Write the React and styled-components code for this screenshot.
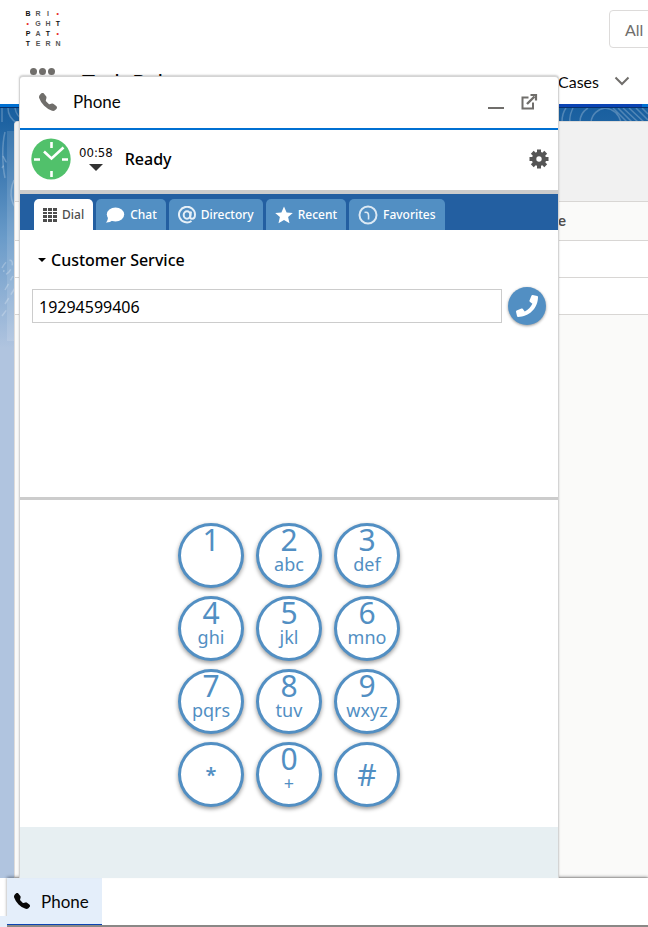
import React, { useState } from "react";
import styled, { createGlobalStyle } from "styled-components";
import { BsTelephoneFill } from "react-icons/bs";
import { FaPhone } from "react-icons/fa";

const LOGO = ["BRI·", "·GHT", "PAT·", "TERN"];
const BOLD = ["B", "T", "P"];

const TABS = [
  { id: "dial", label: "Dial" },
  { id: "chat", label: "Chat" },
  { id: "directory", label: "Directory" },
  { id: "recent", label: "Recent" },
  { id: "favorites", label: "Favorites" },
];

const KEYS = [
  { digit: "1", letters: "" },
  { digit: "2", letters: "abc" },
  { digit: "3", letters: "def" },
  { digit: "4", letters: "ghi" },
  { digit: "5", letters: "jkl" },
  { digit: "6", letters: "mno" },
  { digit: "7", letters: "pqrs" },
  { digit: "8", letters: "tuv" },
  { digit: "9", letters: "wxyz" },
  { digit: "*", symbol: true, small: true },
  { digit: "0", letters: "+" },
  { digit: "#", symbol: true },
];

const Chevron = () => (
  <svg width="16" height="10" viewBox="0 0 16 10" fill="none">
    <path d="M1.5 1.5 8 8l6.500-6.500" stroke="#706e6b" strokeWidth="2" />
  </svg>
);

const PopOut = () => (
  <svg width="18" height="18" viewBox="0 0 18 18" fill="none">
    <path d="M8.500 4.500H2.500v11H13V9.500" stroke="#706e6b" strokeWidth="2" />
    <path d="M7 11 14.500 3.500" stroke="#706e6b" strokeWidth="2.400" />
    <path d="M10.500 2H16v5.500" stroke="#706e6b" strokeWidth="2.200" />
  </svg>
);

const Clock = () => (
  <svg width="40" height="42" viewBox="0 0 40 42">
    <ellipse cx="20" cy="21" rx="19.700" ry="20.500" fill="#51c16b" />
    <g stroke="#fff" strokeWidth="2.600">
      <path d="M20.500 4v6M20.500 33v6M3 21.500h6M31 21.500h6" />
      <path d="M13 13.500 20.500 20.500 32.500 9.500" fill="none" />
    </g>
  </svg>
);

const Gear = () => (
  <svg width="20" height="20" viewBox="-10 -10 20 20" fill="#555">
    {[0, 45, 90, 135].map((a) => (
      <rect key={a} x="-2" y="-9.500" width="4" height="19" transform={`rotate(${a})`} />
    ))}
    <circle r="7.200" />
    <circle r="2.700" fill="#fff" />
  </svg>
);

const TabIcon = ({ id }) => {
  if (id === "dial") {
    return (
      <svg width="14" height="14" viewBox="0 0 14 14" fill="#4d4d4d">
        {[0, 5, 10].map((x) =>
          [0, 4, 7, 11].map((y) => (
            <rect key={`${x}-${y}`} x={x} y={y} width="4" height={y === 4 ? 2 : 3} />
          ))
        )}
      </svg>
    );
  }
  if (id === "chat") {
    return (
      <svg width="20" height="18" viewBox="0 0 20 18" fill="#fff">
        <ellipse cx="10.500" cy="8.500" rx="8.700" ry="7" />
        <path d="M3 10.500C3 14 2 15.500.8 16.500c3 .2 5-.8 6.500-2z" />
      </svg>
    );
  }
  if (id === "directory") {
    return (
      <svg width="18" height="18" viewBox="0 0 18 18" fill="none" stroke="#e6f0f8">
        <path
          d="M13.500 15A8 7.800 0 1 1 17 8.500c0 3-1.500 4.300-3 4.300s-2-1-1.700-2.500L13 5.500"
          strokeWidth="2"
        />
        <ellipse cx="9" cy="9" rx="3.300" ry="3.800" strokeWidth="2" />
      </svg>
    );
  }
  if (id === "recent") {
    return (
      <svg width="18" height="18" viewBox="0 0 18 18" fill="#fff">
        <path d="M9 .5 11.600 6.400 17.800 7 13.100 11.100 14.500 17.300 9 14 3.500 17.300 4.900 11.100.2 7 6.400 6.400z" />
      </svg>
    );
  }
  return (
    <svg width="20" height="20" viewBox="0 0 20 20" fill="none" stroke="#dce9f4">
      <circle cx="10" cy="10" r="8.500" strokeWidth="2" />
      <path d="M6.500 7.500c3.500-.8 4.500.5 4 7" strokeWidth="1.600" />
    </svg>
  );
};

const Waves = () => (
  <WavesSvg width="648" height="240" viewBox="0 0 648 240" fill="none" aria-hidden="true">
    <rect x="7" y="23" width="7" height="210" fill="#fff" fillOpacity=".12" />
    <g stroke="#fff" strokeOpacity=".24" strokeWidth="1.500">
      <path d="M2 0v14M8 0c0 8 4 12 9 15M15 0c1 6 3 9 8 12" />
      <path d="M5 24c-3 12-3 32 0 46M14 72c-6 14-2 28 6 30" />
      <path d="M3 48l3 6-4 6M2 160c5-10 12-10 10-2s-10 12-8 4M5 182l8-14M5 196l10-16M2 208l6-8" strokeDasharray="7 4" />
      <path d="M562 14c0-6 1-10 4-14M570 14c-1-6 1-10 3-14M580 14c0-6 3-11 8-14M591 14c1-8 7-13 14-14 9 1 14 7 16 14" />
      <path d="M613 0l14 14M618 0l14 14M623 0l15 14M629 0l15 14M636 0l12 12M642 0l6 6" />
    </g>
  </WavesSvg>
);

const App = () => {
  const [tab, setTab] = useState("dial");
  const [number, setNumber] = useState("19294599406");

  return (
    <Page>
      <GlobalStyle />
      <Header>
        <TopRow>
          <Logo>
            {LOGO.join("")
              .split("")
              .map((c, i) => (
                <LogoLetter key={i} $dot={c === "·"} $bold={BOLD.includes(c)}>
                  {c}
                </LogoLetter>
              ))}
          </Logo>
          <Scope type="button">All</Scope>
        </TopRow>
        <NavRow>
          <Launcher type="button" aria-label="App launcher">
            <i />
            <i />
            <i />
          </Launcher>
          <AppName>Tech Pubs</AppName>
          <NavItem href="#cases">
            Cases
            <Chevron />
          </NavItem>
        </NavRow>
      </Header>
      <NavLine />
      <Main>
        <Waves />
        <Card>
          <CardHead />
          <CaseTable>
            <thead>
              <tr>
                <th>Date</th>
              </tr>
            </thead>
            <tbody>
              <tr>
                <td />
              </tr>
              <tr>
                <td />
              </tr>
            </tbody>
          </CaseTable>
        </Card>
      </Main>
      <UtilityBar>
        <UtilityButton type="button">
          <BsTelephoneFill size={16} />
          Phone
        </UtilityButton>
      </UtilityBar>

      <Panel>
        <PanelHeader>
          <BsTelephoneFill size={18} color="#706e6b" />
          <PanelTitle>Phone</PanelTitle>
          <IconButton type="button" aria-label="Minimize">
            <Dash />
          </IconButton>
          <IconButton type="button" aria-label="Pop out">
            <PopOut />
          </IconButton>
        </PanelHeader>
        <StatusRow>
          <Clock />
          <Timer type="button">
            00:58
            <Triangle />
          </Timer>
          <StatusText>Ready</StatusText>
          <IconButton type="button" aria-label="Settings">
            <Gear />
          </IconButton>
        </StatusRow>
        <Tabs>
          {TABS.map((t) => (
            <Tab key={t.id} type="button" $active={tab === t.id} onClick={() => setTab(t.id)}>
              <TabIcon id={t.id} />
              {t.label}
            </Tab>
          ))}
        </Tabs>
        <DialArea>
          <Service type="button">
            <Triangle $small />
            Customer Service
          </Service>
          <DialRow>
            <NumberInput
              aria-label="Phone number"
              value={number}
              onChange={(e) => setNumber(e.target.value)}
            />
            <CallButton type="button" aria-label="Call">
              <FaPhone size={22} />
            </CallButton>
          </DialRow>
        </DialArea>
        <Keypad>
          {KEYS.map((k) => (
            <Key
              key={k.digit}
              type="button"
              $symbol={k.symbol}
              onClick={() => setNumber(number + k.digit)}
            >
              <Digit $small={k.small}>{k.digit}</Digit>
              {k.letters && <Letters>{k.letters}</Letters>}
            </Key>
          ))}
        </Keypad>
        <PanelFooter />
      </Panel>
    </Page>
  );
};

export default App;

const GlobalStyle = createGlobalStyle`
  * {
    box-sizing: border-box;
  }
  body {
    margin: 0;
    font-family: Lato, "Liberation Sans", sans-serif;
    font-size: 16px;
    color: #080707;
  }
  button, input {
    font: inherit;
    color: inherit;
    margin: 0;
  }
  button {
    border: 0;
    padding: 0;
    background: none;
    cursor: pointer;
  }
  svg {
    display: block;
    flex: none;
  }
`;

const Page = styled.div`
  position: relative;
  display: flex;
  flex-direction: column;
  min-height: 100vh;
  overflow: hidden;
  background: #fff;
`;

const Header = styled.header`
  height: 104px;
`;

const TopRow = styled.div`
  display: flex;
  justify-content: space-between;
  align-items: flex-start;
  height: 58px;
  padding: 9px 0 0 23px;
`;

const Logo = styled.div`
  display: grid;
  grid-template-columns: repeat(4, 10px);
  grid-auto-rows: 10px;
`;

const LogoLetter = styled.span`
  font-family: "Liberation Sans", Arial, sans-serif;
  font-size: ${(p) => (p.$dot ? 12 : 7)}px;
  line-height: 10px;
  text-align: center;
  font-weight: 700;
  color: ${(p) => (p.$dot ? "#e8322c" : p.$bold ? "#111" : "#555")};
`;

const Scope = styled.button`
  width: 60px;
  height: 38px;
  margin: 1px -21px 0 0;
  padding-left: 15px;
  border: 1px solid #dddbda;
  border-radius: 4px;
  text-align: left;
  color: #706e6b;
`;

const NavRow = styled.nav`
  display: flex;
  align-items: center;
  height: 46px;
  padding: 0 18px 0 30px;
`;

const Launcher = styled.button`
  display: flex;
  gap: 2px;
  padding-bottom: 20px;

  i {
    width: 7px;
    height: 7px;
    border-radius: 50%;
    background: #706e6b;
  }
`;

const AppName = styled.span`
  flex: 1;
  padding-left: 27px;
  font-size: 22px;
`;

const NavItem = styled.a`
  display: flex;
  align-items: center;
  gap: 15px;
  color: inherit;
  text-decoration: none;
`;

const NavLine = styled.div`
  height: 4px;
  background: linear-gradient(to right, #0070d2 85%, #0b44b4 85% 99%, #0070d2 99%);
  border-bottom: 1px solid #06306b;
`;

const Main = styled.main`
  position: relative;
  flex: 1;
  display: flex;
  padding: 13px 0 0 14px;
  background: linear-gradient(to bottom, #195f9f 0, #1e63a2 16px, #6a9bc9 130px, #b0c4df 240px);
`;

const WavesSvg = styled.svg`
  position: absolute;
  top: 0;
  left: 0;
`;

const Card = styled.section`
  position: relative;
  flex: 1;
  border: 1px solid #dddbda;
  border-right: 0;
  border-radius: 4px 0 0 0;
  background: #fafaf9;
  overflow: hidden;
`;

const CardHead = styled.div`
  height: 79px;
  background: #f1f1f1;
`;

const CaseTable = styled.table`
  width: 100%;
  border-collapse: collapse;

  th {
    height: 39px;
    padding: 0 82px 2px 0;
    border-top: 1px solid #d8d6d4;
    text-align: right;
    font-size: 15px;
    font-weight: 700;
    color: #514f4d;
  }

  td {
    height: 37px;
    padding: 0;
    border: solid #d8d6d4;
    border-width: 1px 0;
    background: #fff;
  }
`;

const UtilityBar = styled.footer`
  position: relative;
  display: flex;
  height: 49px;
  margin-left: 7px;
  border-bottom: 2px solid #8a8886;
  background: #fff;
  box-shadow: -7px 38px 0 #e4eefa, 0 -1px 3px rgba(0, 0, 0, 0.4);
`;

const UtilityButton = styled.button`
  display: flex;
  align-items: center;
  gap: 11px;
  padding: 0 13px 0 7px;
  border-bottom: 1px solid #0b44b4;
  background: #e4eefa;
  font-size: 17px;
`;

const Panel = styled.aside`
  position: absolute;
  top: 76px;
  left: 19px;
  right: 89px;
  bottom: 49px;
  display: flex;
  flex-direction: column;
  border: solid #d4d4d4;
  border-width: 1px 1px 0;
  border-radius: 4px 4px 0 0;
  background: #fff;
  box-shadow: 0 -1px 2px rgba(0, 0, 0, 0.2);
`;

const PanelHeader = styled.div`
  display: flex;
  align-items: center;
  gap: 16px;
  height: 53px;
  padding: 0 20px 2px 19px;
  border-bottom: 2px solid #0070d2;
`;

const PanelTitle = styled.h2`
  flex: 1;
  margin: 0;
  font-size: 17px;
  font-weight: 400;
`;

const IconButton = styled.button`
  display: flex;
`;

const Dash = styled.span`
  width: 16px;
  height: 2px;
  margin-top: 12px;
  background: #706e6b;
`;

const StatusRow = styled.div`
  display: flex;
  align-items: center;
  height: 64px;
  padding: 0 9px 2px 11px;
  border-bottom: 4px solid #ccc;
`;

const Timer = styled.button`
  display: flex;
  flex-direction: column;
  align-items: center;
  gap: 3px;
  padding: 0 12px 2px 8px;
  font-family: "DejaVu Sans Condensed", "DejaVu Sans", sans-serif;
  font-size: 13px;
  line-height: 16px;
`;

const Triangle = styled.span`
  border: solid transparent;
  border-width: ${(p) => (p.$small ? "4px 4px 0" : "7px 7px 0")};
  border-top-color: ${(p) => (p.$small ? "#000" : "#333")};
`;

const StatusText = styled.span`
  flex: 1;
  font-family: "Noto Sans", sans-serif;
  font-weight: 500;
  color: #000;
`;

const Tabs = styled.div`
  display: flex;
  align-items: flex-end;
  gap: 3px;
  height: 36px;
  padding: 0 14px;
  background: #235fa1;
`;

const Tab = styled.button`
  display: flex;
  align-items: center;
  gap: 5px;
  height: 31px;
  padding: 0 9px;
  border-radius: 5px 5px 0 0;
  background: ${(p) => (p.$active ? "#fff" : "#528fc3")};
  color: ${(p) => (p.$active ? "#4d4d4d" : "#fff")};
  font-family: "Noto Sans", sans-serif;
  font-size: 12px;
  font-weight: 500;
`;

const DialArea = styled.div`
  height: 270px;
  padding: 18px 12px;
  border-bottom: 3px solid #ccc;
`;

const Service = styled.button`
  display: flex;
  align-items: center;
  gap: 5px;
  padding-left: 6px;
  font-family: "Noto Sans", sans-serif;
  font-weight: 500;
  line-height: 24px;
  color: #000;
`;

const DialRow = styled.div`
  display: flex;
  align-items: center;
  gap: 6px;
  margin-top: 15px;
`;

const NumberInput = styled.input`
  flex: 1;
  min-width: 0;
  height: 34px;
  padding: 2px 6px 0;
  border: 1px solid #ccc;
  outline: none;
  font-family: "Noto Sans", sans-serif;
  color: #000;
`;

const CallButton = styled.button`
  display: flex;
  align-items: center;
  justify-content: center;
  width: 38px;
  height: 38px;
  border-radius: 50%;
  background: #528fc3;
  color: #fff;
  box-shadow: 0 1px 3px rgba(0, 0, 0, 0.4);
`;

const Keypad = styled.div`
  display: grid;
  grid-template-columns: repeat(3, 66px);
  justify-content: center;
  align-content: start;
  gap: 8px 12px;
  flex: 1;
  padding-top: 23px;
`;

const Key = styled.button`
  display: flex;
  flex-direction: column;
  align-items: center;
  justify-content: ${(p) => (p.$symbol ? "center" : "flex-start")};
  height: 65px;
  border: 3px solid #528fc3;
  border-radius: 50%;
  background: #fff;
  color: #528fc3;
  font-family: "Noto Sans", sans-serif;
  box-shadow: 0 2px 4px rgba(0, 0, 0, 0.4);
`;

const Digit = styled.span`
  font-size: ${(p) => (p.$small ? 20 : 30)}px;
  font-weight: ${(p) => (p.$small ? 600 : 400)};
  line-height: 28px;
`;

const Letters = styled.span`
  font-size: 18px;
  line-height: 20px;
`;

const PanelFooter = styled.div`
  height: 51px;
  background: #e7eff2;
`;
